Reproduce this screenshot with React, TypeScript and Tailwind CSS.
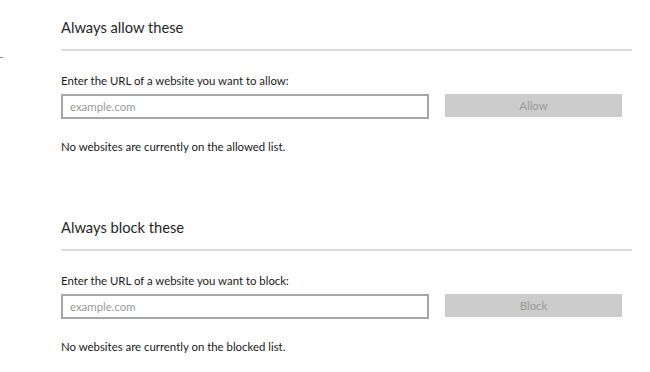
function Section({ title, label, action, empty }: { title: string; label: string; action: string; empty: string }) {
  return (
    <section className="flex flex-col">
      <h2 className="h-[20px] text-[14.7px] leading-[20px] font-normal text-[#262626]">{title}</h2>
      <div className="mt-[12px] h-[2px] w-[571px] bg-[#dcdcdc]" />
      <p className="mt-[22px] h-[16px] text-[11.4px] leading-[16px] text-[#1a1a1a]">{label}</p>
      <div className="mt-[5px] flex items-start">
        <input
          type="text"
          placeholder="example.com"
          className="h-[25px] w-[368px] border-2 border-[#a6a6a6] bg-white px-[7px] text-[11.4px] text-[#222] outline-none placeholder:text-[#9a9a9a]"
        />
        <button
          type="button"
          disabled
          className="ml-[16px] h-[23px] w-[177px] bg-[#cccccc] text-[11.4px] text-[#9a9a9a]"
        >
          {action}
        </button>
      </div>
      <p className="mt-[20px] h-[16px] text-[11.4px] leading-[16px] text-[#1a1a1a]">{empty}</p>
    </section>
  )
}

export default function App() {
  return (
    <div
      className="relative flex h-[372px] w-[650px] flex-col gap-[62px] overflow-hidden bg-white pt-[17px] pl-[61px]"
      style={{ fontFamily: 'Lato, "Noto Sans", sans-serif' }}
    >
      {/* clipped edge of a nav item */}
      <span className="absolute top-[57px] left-0 h-[1px] w-[3px] bg-[#888]" />
      <Section
        title="Always allow these"
        label="Enter the URL of a website you want to allow:"
        action="Allow"
        empty="No websites are currently on the allowed list."
      />
      <Section
        title="Always block these"
        label="Enter the URL of a website you want to block:"
        action="Block"
        empty="No websites are currently on the blocked list."
      />
    </div>
  )
}
